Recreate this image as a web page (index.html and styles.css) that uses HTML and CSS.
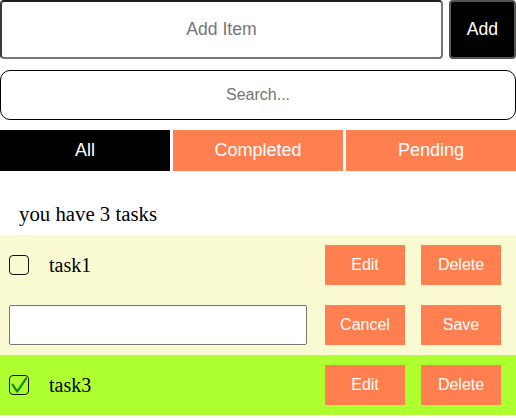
FILE: index.html
```html
<!DOCTYPE html>
<html>
<head>
<meta charset="utf-8">
<link rel="stylesheet" href="styles.css">
</head>
<body>
<div class="app">
  <div class="add-row">
    <input class="add-input" type="text" placeholder="Add Item">
    <button class="add-btn">Add</button>
  </div>
  <input class="search" type="text" placeholder="Search...">
  <div class="filters">
    <button class="filter active">All</button>
    <button class="filter">Completed</button>
    <button class="filter">Pending</button>
  </div>
  <div class="count">you have 3 tasks</div>
  <div class="task pending">
    <span class="check"></span>
    <span class="name">task1</span>
    <div class="actions">
      <button class="act">Edit</button>
      <button class="act">Delete</button>
    </div>
  </div>
  <div class="task pending">
    <input class="edit-input" type="text">
    <div class="actions">
      <button class="act">Cancel</button>
      <button class="act">Save</button>
    </div>
  </div>
  <div class="task done">
    <span class="check"><svg width="20" height="20" viewBox="0 0 20 20"><path d="M3.6 9.6 L8.2 16.6 L17 3.6" fill="none" stroke="#138a13" stroke-width="2.2" stroke-linejoin="round" stroke-linecap="round"/></svg></span>
    <span class="name">task3</span>
    <div class="actions">
      <button class="act">Edit</button>
      <button class="act">Delete</button>
    </div>
  </div>
</div>
</body>
</html>
```

FILE: styles.css
```css
* { box-sizing: border-box; }
html, body { margin: 0; padding: 0; background: #fff; }
body { font-family: "Liberation Sans", Arial, sans-serif; }

.app { width: 516px; }

.add-row {
  display: flex;
  gap: 6px;
  height: 59px;
}
.add-input {
  flex: 1;
  min-width: 0;
  height: 59px;
  border: 2px solid #767676;
  border-top-color: #1e1e1e;
  border-left-color: #3a3a3a;
  border-radius: 4px;
  text-align: center;
  font-family: "Liberation Sans", Arial, sans-serif;
  font-size: 17.6px;
  color: #000;
  background: #fff;
  outline: none;
}
.add-input::placeholder { color: #757575; }
.add-btn {
  width: 67px;
  height: 59px;
  background: #000;
  color: #fff;
  border: 2px solid #555;
  border-radius: 4px;
  font-family: "Liberation Sans", Arial, sans-serif;
  font-size: 17.6px;
  padding: 0;
}

.search {
  display: block;
  width: 516px;
  height: 50px;
  margin-top: 11px;
  border: 1px solid #000;
  border-radius: 10px;
  text-align: center;
  font-family: "Liberation Sans", Arial, sans-serif;
  font-size: 16px;
  background: #fff;
  outline: none;
}
.search::placeholder { color: #757575; }

.filters {
  display: flex;
  gap: 3px;
  margin-top: 10px;
  height: 41px;
}
.filter {
  flex: 1;
  border: none;
  background: #ff7f50;
  color: #fff;
  font-family: "Liberation Sans", Arial, sans-serif;
  font-size: 18px;
  padding: 0;
}
.filter.active { background: #000; }

.count {
  height: 64px;
  padding: 31px 0 0 19px;
  font-family: "Liberation Serif", "Times New Roman", serif;
  font-size: 20.8px;
  line-height: 24px;
  color: #000;
}

.task {
  display: flex;
  align-items: center;
  height: 60px;
  padding: 0 15px 0 9px;
}
.task.pending { background: #fafad2; }
.task.done { background: #adff2f; }

.check {
  width: 20px;
  height: 20px;
  border: 1.3px solid #111;
  border-radius: 4px;
  flex: none;
  display: flex;
  align-items: center;
  justify-content: center;
  overflow: hidden;
}
.check svg { display: block; flex: none; }

.name {
  margin-left: 20px;
  font-family: "Liberation Serif", "Times New Roman", serif;
  font-size: 20px;
  color: #000;
}

.actions {
  margin-left: auto;
  display: flex;
  gap: 16px;
}
.act {
  width: 80px;
  height: 40px;
  border: none;
  background: #ff7f50;
  color: #fff;
  font-family: "Liberation Sans", Arial, sans-serif;
  font-size: 16px;
  padding: 0;
}

.edit-input {
  width: 298px;
  height: 40px;
  border: 1px solid #767676;
  border-radius: 2px;
  background: #fff;
  outline: none;
}
```
